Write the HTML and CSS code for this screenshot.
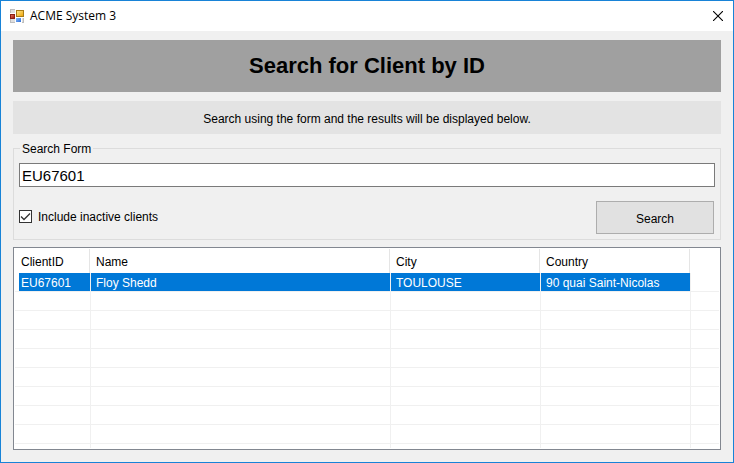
FILE: index.html
```html
<!DOCTYPE html>
<html lang="en">
<head>
<meta charset="utf-8">
<title>ACME System 3</title>
<link rel="stylesheet" href="styles.css">
</head>
<body>
<div class="window">
  <header class="titlebar">
    <svg class="app-icon" width="14" height="14" viewBox="0 0 14 14" aria-hidden="true">
      <defs>
        <linearGradient id="gold" x1="0" y1="0" x2="1" y2="1"><stop offset="0" stop-color="#ffe58a"/><stop offset="1" stop-color="#eda60a"/></linearGradient>
        <linearGradient id="red" x1="0" y1="0" x2="1" y2="1"><stop offset="0" stop-color="#e0705c"/><stop offset="1" stop-color="#a01c10"/></linearGradient>
        <linearGradient id="blue" x1="0" y1="0" x2="1" y2="1"><stop offset="0" stop-color="#86b8fa"/><stop offset="1" stop-color="#2d6fd8"/></linearGradient>
      </defs>
      <rect width="14" height="14" fill="#bdbdbd"/>
      <path d="M1 1h4v3H1zM1 10h4v3H1zM12 9h1v4h-1z" fill="#dedede"/>
      <rect x="5" y="0" width="9" height="9" fill="#fff"/>
      <rect x="6" y="1" width="8" height="7" fill="#a87b16"/>
      <rect x="7" y="2" width="6" height="5" fill="url(#gold)"/>
      <rect x="0" y="4" width="6" height="6" fill="#fff"/>
      <rect x="0" y="5" width="5" height="5" fill="#8c2016"/>
      <rect x="1" y="6" width="3" height="3" fill="url(#red)"/>
      <rect x="5" y="9" width="7" height="5" fill="#fff"/>
      <rect x="6" y="9" width="5" height="4" fill="url(#blue)"/>
    </svg>
    <span class="caption">ACME System 3</span>
    <button class="close" type="button" aria-label="Close">
      <svg width="10" height="10" viewBox="0 0 10 10"><path d="M0 0L10 10M10 0L0 10" stroke="#000" stroke-width="1.1"/></svg>
    </button>
  </header>
  <main class="content">
    <h1 class="banner">Search for Client by ID</h1>
    <p class="hint">Search using the form and the results will be displayed below.</p>
    <form>
      <fieldset class="group">
        <legend>Search Form</legend>
        <input class="query" type="text" value="EU67601" aria-label="Client ID">
        <div class="actions">
          <label class="option"><input type="checkbox" checked>Include inactive clients</label>
          <button class="search" type="button">Search</button>
        </div>
      </fieldset>
    </form>
    <div class="list">
      <table>
        <colgroup><col class="col-id"><col class="col-name"><col class="col-city"><col class="col-country"><col></colgroup>
        <thead>
          <tr><th>ClientID</th><th>Name</th><th>City</th><th>Country</th><td></td></tr>
        </thead>
        <tbody>
          <tr class="selected"><td>EU67601</td><td>Floy Shedd</td><td>TOULOUSE</td><td>90 quai Saint-Nicolas</td><td></td></tr>
          <tr><td></td><td></td><td></td><td></td><td></td></tr>
          <tr><td></td><td></td><td></td><td></td><td></td></tr>
          <tr><td></td><td></td><td></td><td></td><td></td></tr>
          <tr><td></td><td></td><td></td><td></td><td></td></tr>
          <tr><td></td><td></td><td></td><td></td><td></td></tr>
          <tr><td></td><td></td><td></td><td></td><td></td></tr>
          <tr><td></td><td></td><td></td><td></td><td></td></tr>
          <tr><td></td><td></td><td></td><td></td><td></td></tr>
          <tr class="tail"><td></td><td></td><td></td><td></td><td></td></tr>
        </tbody>
      </table>
    </div>
  </main>
</div>
</body>
</html>
```
FILE: styles.css
```css
* {
  box-sizing: border-box;
}

body {
  margin: 0;
  font: 12px/16px "Liberation Sans", Arial, sans-serif;
  color: #000;
}

.window {
  display: flex;
  flex-direction: column;
  min-height: 100vh;
  border: 1px solid #1883d7;
  background: #f0f0f0;
}

.titlebar {
  display: flex;
  align-items: center;
  height: 30px;
  padding-left: 9px;
  background: #fff;
}

.caption {
  flex: 1;
  margin-left: 6px;
  font-family: "Open Sans", "Noto Sans", sans-serif;
}

.close {
  display: flex;
  align-items: center;
  justify-content: center;
  width: 30px;
  height: 28px;
  padding: 0;
  border: 0;
  background: none;
}

.content {
  flex: 1;
  display: flex;
  flex-direction: column;
  padding: 9px 12px 12px;
}

.banner {
  margin: 0;
  padding: 12px 0;
  background: #a0a0a0;
  font-size: 22px;
  line-height: 28px;
  text-align: center;
}

.hint {
  margin: 9px 0 7px;
  padding: 10px 0 7px;
  background: #e3e3e3;
  text-align: center;
}

.group {
  min-width: 0;
  margin: 0;
  padding: 8px 5px 5px;
  border: 1px solid #dcdcdc;
}

.group legend {
  margin-left: 1px;
  padding: 2px 2px 0;
  line-height: 12px;
}

.query {
  display: block;
  width: 100%;
  height: 24px;
  padding: 0 2px;
  border: 1px solid #7a7a7a;
  background: #fff;
  font: 15px/20px "Liberation Sans", Arial, sans-serif;
}

.actions {
  display: flex;
  align-items: center;
  justify-content: space-between;
  margin-top: 14px;
  padding-right: 1px;
}

.option {
  display: flex;
  align-items: center;
  gap: 6px;
  padding-bottom: 2px;
}

.option input {
  appearance: none;
  width: 13px;
  height: 13px;
  margin: 0;
  border: 1px solid #333;
  background: #fff url("data:image/svg+xml,%3Csvg xmlns='http://www.w3.org/2000/svg' viewBox='0 0 11 11'%3E%3Cpath d='M1 5.5L4 8.5L10 2.5' fill='none' stroke='%23333' stroke-width='1.3'/%3E%3C/svg%3E");
}

.search {
  width: 118px;
  height: 33px;
  padding: 2px 0 0;
  border: 1px solid #adadad;
  background: #e1e1e1;
  font: inherit;
}

.list {
  flex: 1;
  margin-top: 7px;
  padding: 1px;
  border: 1px solid #828790;
  background: #fff;
  overflow: hidden;
}

table {
  width: 100%;
  table-layout: fixed;
  border-collapse: separate;
  border-spacing: 0;
}

.col-id {
  width: 76px;
}

.col-name {
  width: 300px;
}

.col-city,
.col-country {
  width: 150px;
}

th {
  height: 24px;
  padding: 2px 5px 0;
  border-right: 1px solid #fff;
  background: linear-gradient(#e5e5e5, #e5e5e5) right / 1px 100% no-repeat;
  font-weight: normal;
  text-align: left;
}

td {
  height: 19px;
  padding: 3px 5px 0;
  border-right: 1px solid #f0f0f0;
  border-bottom: 1px solid #f0f0f0;
  line-height: 15px;
}

th:first-child,
td:first-child {
  padding-left: 6px;
}

td:last-child {
  border-right: 0;
}

thead td {
  border-bottom: 0;
}

.selected td {
  background: #0078d7;
  background-clip: padding-box;
  color: #fff;
}

.selected td:first-child {
  background: linear-gradient(to right, #fff 4px, #0078d7 4px) padding-box;
}

.selected td:last-child {
  background: none;
}

.tail td {
  height: 4px;
  padding: 0;
  border-bottom: 0;
}
```
